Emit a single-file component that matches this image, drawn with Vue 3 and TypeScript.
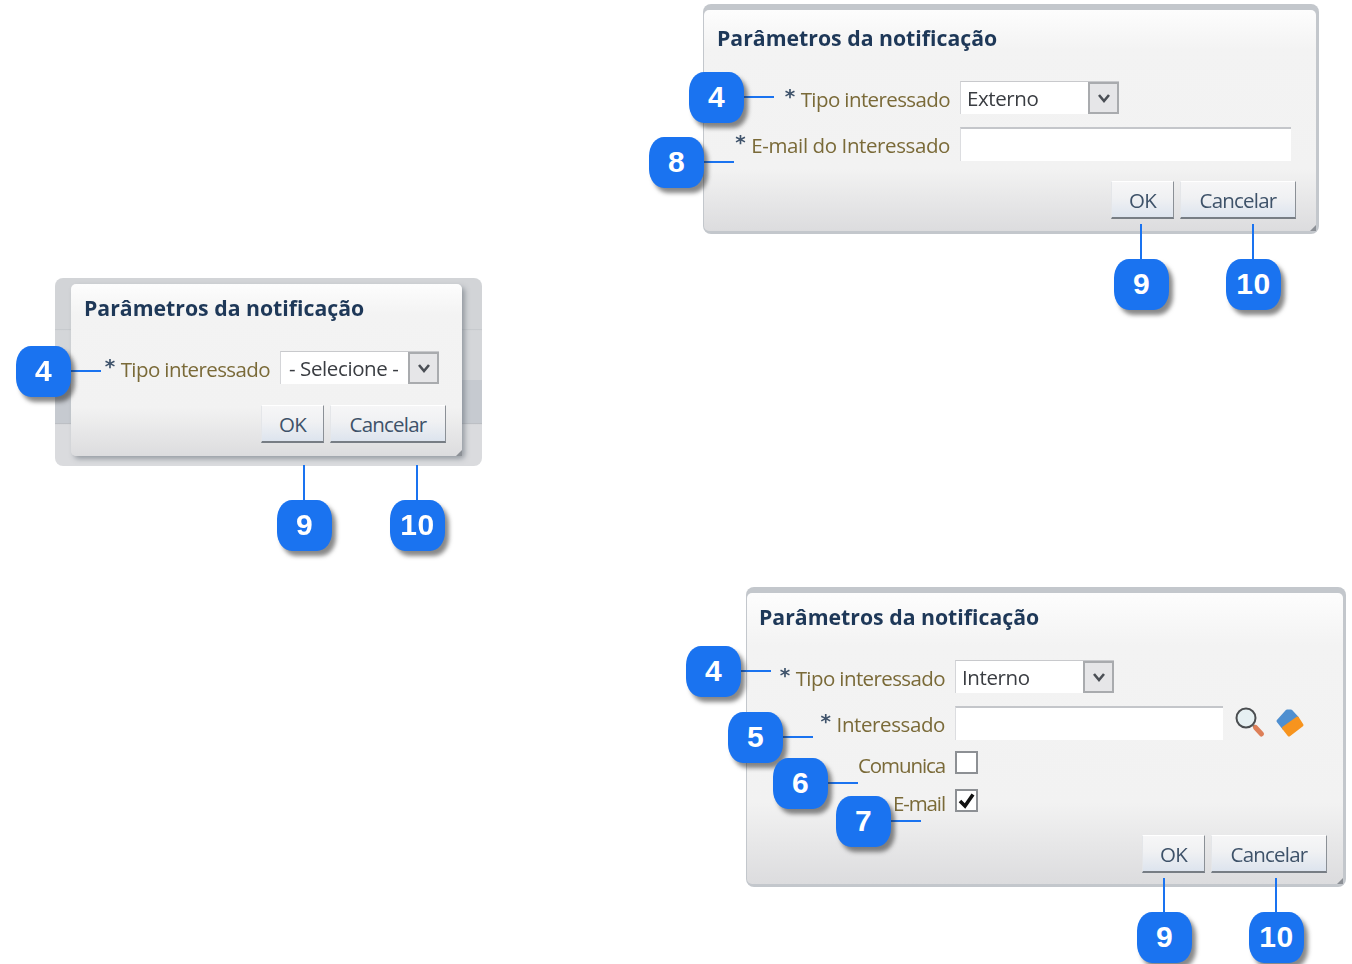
<script setup lang="ts">
interface Field {
  kind: 'select' | 'input' | 'check'
  label: string
  required?: boolean
  value?: string
  checked?: boolean
  width: number
  tools?: boolean
}

interface Callout {
  n: number
  x: number
  y: number
  // connector going right of the badge, or up from it
  right?: number
  up?: number
}

interface Dialog {
  id: string
  box: { left: number; top: number; width: number; height: number }
  labelWidth: number
  fields: Field[]
}

const dialogs: Dialog[] = [
  {
    id: 'first',
    box: { left: 55, top: 278, width: 427, height: 188 },
    labelWidth: 186,
    fields: [{ kind: 'select', label: 'Tipo interessado', required: true, value: '- Selecione -', width: 159 }]
  },
  {
    id: 'second',
    box: { left: 703, top: 4, width: 616, height: 230 },
    labelWidth: 233,
    fields: [
      { kind: 'select', label: 'Tipo interessado', required: true, value: 'Externo', width: 159 },
      { kind: 'input', label: 'E-mail do Interessado', required: true, width: 331 }
    ]
  },
  {
    id: 'third',
    box: { left: 746, top: 587, width: 600, height: 300 },
    labelWidth: 186,
    fields: [
      { kind: 'select', label: 'Tipo interessado', required: true, value: 'Interno', width: 159 },
      { kind: 'input', label: 'Interessado', required: true, width: 268, tools: true },
      { kind: 'check', label: 'Comunica', width: 23 },
      { kind: 'check', label: 'E-mail', checked: true, width: 23 }
    ]
  }
]

const callouts: Callout[] = [
  { n: 4, x: 16, y: 346, right: 30 },
  { n: 9, x: 277, y: 500, up: 35 },
  { n: 10, x: 390, y: 500, up: 35 },
  { n: 4, x: 689, y: 72, right: 30 },
  { n: 8, x: 649, y: 137, right: 30 },
  { n: 9, x: 1114, y: 259, up: 35 },
  { n: 10, x: 1226, y: 259, up: 35 },
  { n: 4, x: 686, y: 646, right: 30 },
  { n: 5, x: 728, y: 712, right: 30 },
  { n: 6, x: 773, y: 758, right: 30 },
  { n: 7, x: 836, y: 796, right: 30 },
  { n: 9, x: 1137, y: 912, up: 34 },
  { n: 10, x: 1249, y: 912, up: 34 }
]

function boxStyle(d: Dialog) {
  return {
    left: d.box.left + 'px',
    top: d.box.top + 'px',
    width: d.box.width + 'px',
    height: d.box.height + 'px'
  }
}
</script>

<template>
  <div class="canvas">
    <section v-for="d in dialogs" :key="d.id" class="frame" :class="d.id" :style="boxStyle(d)">
      <div class="dialog">
        <h2 class="title">Parâmetros da notificação</h2>
        <div class="rows">
          <div v-for="f in d.fields" :key="f.label" class="row" :class="'row-' + f.kind">
            <label class="label" :style="{ width: d.labelWidth + 'px' }">
              <span v-if="f.required" class="req">*</span>{{ f.label }}
            </label>

            <div v-if="f.kind === 'select'" class="select" :style="{ width: f.width + 'px' }">
              <span class="select-value">{{ f.value }}</span>
              <span class="select-btn">
                <svg width="14" height="12" viewBox="0 0 14 12">
                  <path d="M2 3 L7 9 L12 3" fill="none" stroke="#4b4f55" stroke-width="2.6" />
                </svg>
              </span>
            </div>

            <template v-else-if="f.kind === 'input'">
              <div class="input" :style="{ width: f.width + 'px' }"></div>
              <div v-if="f.tools" class="tools">
                <svg width="32" height="32" viewBox="0 0 32 32">
                  <circle cx="12" cy="11" r="9.500" fill="#e6f0f2" stroke="#4a4d50" stroke-width="2" />
                  <path d="M19 18 L21 20" stroke="#77706a" stroke-width="2.500" />
                  <path d="M21.500 20.500 L27.500 27" stroke="#dd7f58" stroke-width="5" stroke-linecap="round" />
                </svg>
                <svg width="30" height="30" viewBox="0 0 30 30">
                  <path d="M12 3 L3 13 L8.500 20 L22.500 10 L16 3 Z" fill="#4f8fd0" stroke="#4f8fd0" stroke-width="3" stroke-linejoin="round" />
                  <path d="M8.500 20 L22.500 10 L27 17 L14 27 Z" fill="#f7941e" stroke="#f7941e" stroke-width="3" stroke-linejoin="round" />
                </svg>
              </div>
            </template>

            <div v-else class="check">
              <svg v-if="f.checked" width="19" height="19" viewBox="0 0 19 19">
                <path d="M3 10 L8 15 L16 3.500" fill="none" stroke="#111" stroke-width="3.600" />
              </svg>
            </div>
          </div>
        </div>
        <div class="actions">
          <button class="btn btn-ok" type="button">OK</button>
          <button class="btn btn-cancel" type="button">Cancelar</button>
        </div>
      </div>
    </section>

    <div
      v-for="c in callouts"
      :key="c.n + '-' + c.x"
      class="callout"
      :style="{ left: c.x + 'px', top: c.y + 'px' }"
    >
      <span v-if="c.right" class="wire wire-right" :style="{ width: c.right + 'px' }"></span>
      <span v-if="c.up" class="wire wire-up" :style="{ height: c.up + 'px' }"></span>
      <span class="badge">{{ c.n }}</span>
    </div>
  </div>
</template>

<style scoped>
.canvas {
  position: relative;
  width: 1352px;
  height: 964px;
  overflow: hidden;
  background: #fff;
  font-family: "Open Sans", "Noto Sans", sans-serif;
}

.frame {
  position: absolute;
  box-sizing: border-box;
  display: flex;
  padding: 6px 3px 3px 1px;
  border-radius: 8px;
  background: #c3c7cc;
  filter: blur(0.5px);
}

.frame.first {
  padding: 6px 20px 10px 16px;
  background: linear-gradient(
    #d2d4d7,
    #d2d4d7 27%,
    #bfc2c6 27%,
    #d4d6d9 28%,
    #d4d6d9 54%,
    #c6cad0 54%,
    #c6cad0 77%,
    #a9adb3 77%,
    #dadbde 78%
  );
}

.dialog {
  position: relative;
  flex: 1;
  display: flex;
  flex-direction: column;
  box-sizing: border-box;
  padding: 0 19px 0 13px;
  border-radius: 5px;
  background: linear-gradient(#fdfdfd 0, #f3f3f3 18%, #f2f2f2 72%, #dcdcde 100%);
}

/* resize grip in the corner */
.dialog::after {
  content: "";
  position: absolute;
  right: 0;
  bottom: 0;
  border-style: solid;
  border-width: 0 0 6px 6px;
  border-color: transparent transparent #8c9096 transparent;
}

.third .dialog {
  padding-left: 12px;
}

.first .dialog {
  padding: 0 16px 0 13px;
  box-shadow: 3px 3px 5px rgba(90, 100, 110, 0.5);
}

.title {
  margin: 9px 0 0;
  font-size: 21.250px;
  line-height: 30px;
  font-weight: 700;
  color: #1e3858;
  white-space: nowrap;
}

.second .title {
  margin-top: 13px;
}

.rows {
  display: flex;
  flex-direction: column;
  margin-top: 28px;
  gap: 13px;
}

.row {
  display: flex;
  align-items: center;
  gap: 10px;
}

.row-check {
  height: 23px;
  margin-top: -2px;
}

.row-check + .row-check {
  margin-top: 2px;
}

.label {
  box-sizing: border-box;
  padding-top: 2px;
  text-align: right;
  font-size: 20.500px;
  letter-spacing: -0.600px;
  color: #7a6a38;
  white-space: nowrap;
}

.row-input .label {
  letter-spacing: -0.400px;
}

.row-check .label {
  padding-top: 5px;
  letter-spacing: -1.100px;
}

.req {
  margin-right: 6px;
  color: #3f536b;
  font-family: "DejaVu Sans", sans-serif;
  font-weight: 700;
  font-size: 20px;
  line-height: 1;
  position: relative;
  top: -4px;
}

.select {
  display: flex;
  height: 33px;
  box-sizing: border-box;
  background: #fff;
  border-top: 1px solid #c8c9cc;
  border-left: 1px solid #d4d5d8;
}

.select-value {
  flex: 1;
  padding-left: 6px;
  font-size: 20.500px;
  letter-spacing: -0.400px;
  line-height: 32px;
  color: #3a3d42;
  white-space: nowrap;
  overflow: hidden;
}

.first .select-value {
  padding-left: 8px;
}

.select-btn {
  width: 31px;
  box-sizing: border-box;
  display: flex;
  align-items: center;
  justify-content: center;
  border: 2px solid #a9abae;
  background: #e6e6e8;
}

.input {
  height: 34px;
  box-sizing: border-box;
  background: #fff;
  border-top: 2px solid #c4c6ca;
  border-left: 1px solid #dcdde0;
}

.tools {
  display: flex;
  align-items: center;
  gap: 9px;
  margin-left: 1px;
}

.check {
  width: 23px;
  height: 23px;
  box-sizing: border-box;
  display: flex;
  align-items: center;
  justify-content: center;
  background: #fff;
  border: 2px solid #8d9094;
}

.actions {
  margin-top: auto;
  margin-bottom: 13px;
  display: flex;
  justify-content: flex-end;
  gap: 6px;
}

.second .actions {
  margin-bottom: 12px;
  margin-right: 1px;
}

.third .actions {
  margin-bottom: 11px;
  margin-right: -3px;
}

.btn {
  height: 38px;
  padding: 0;
  font: inherit;
  font-size: 20.500px;
  letter-spacing: -0.800px;
  color: #3e5269;
  background: linear-gradient(#f6f6f7, #f0f1f3 45%, #dde4ee);
  border: 0;
  border-top: 1px solid #fff;
  border-right: 1px solid #8b9096;
  border-bottom: 2px solid #777d84;
  border-left: 1px solid #e4e6e9;
}

.btn-ok {
  width: 63px;
}

.btn-cancel {
  width: 116px;
}

.callout {
  position: absolute;
  width: 55px;
  height: 51px;
}

.badge {
  position: relative;
  display: flex;
  align-items: center;
  justify-content: center;
  box-sizing: border-box;
  padding-bottom: 2px;
  width: 100%;
  height: 100%;
  border-radius: 15px / 19px;
  background: #1a73f0;
  box-shadow: 4px 5px 4px rgba(40, 40, 40, 0.55);
  color: #fff;
  font-family: "Liberation Sans", Arial, sans-serif;
  font-weight: 700;
  font-size: 30px;
  letter-spacing: 0.500px;
}

.wire {
  position: absolute;
  background: #1a73f0;
}

.wire-right {
  left: 100%;
  top: 24px;
  height: 2px;
}

.wire-up {
  left: 26px;
  bottom: 100%;
  width: 2px;
}
</style>

<style>
html,
body {
  background: #fff;
}
</style>
